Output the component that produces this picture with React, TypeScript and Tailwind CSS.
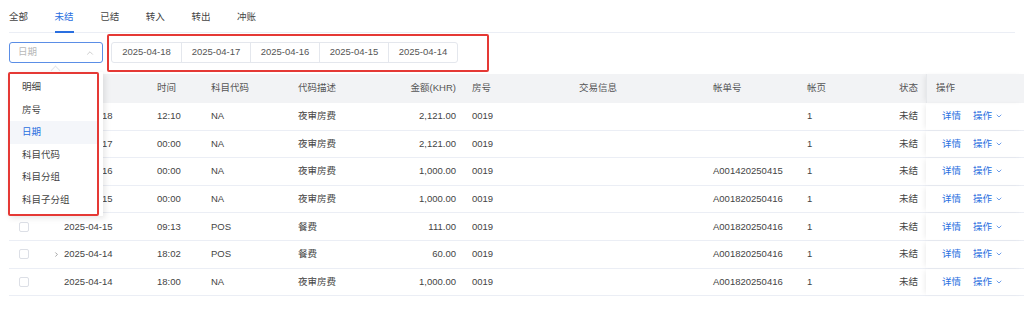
import { ChevronDown, ChevronRight, ChevronUp } from "lucide-react";

const tabs = ["全部", "未结", "已结", "转入", "转出", "冲账"];
const dates = ["2025-04-18", "2025-04-17", "2025-04-16", "2025-04-15", "2025-04-14"];
const groupBy = ["明细", "房号", "日期", "科目代码", "科目分组", "科目子分组"];

const rows = [
  { date: "2025-04-18", time: "12:10", code: "NA", desc: "夜审房费", amount: "2,121.00", room: "0019", bill: "", expand: false },
  { date: "2025-04-17", time: "00:00", code: "NA", desc: "夜审房费", amount: "2,121.00", room: "0019", bill: "", expand: false },
  { date: "2025-04-16", time: "00:00", code: "NA", desc: "夜审房费", amount: "1,000.00", room: "0019", bill: "A001420250415", expand: false },
  { date: "2025-04-15", time: "00:00", code: "NA", desc: "夜审房费", amount: "1,000.00", room: "0019", bill: "A001820250416", expand: false },
  { date: "2025-04-15", time: "09:13", code: "POS", desc: "餐费", amount: "111.00", room: "0019", bill: "A001820250416", expand: false },
  { date: "2025-04-14", time: "18:02", code: "POS", desc: "餐费", amount: "60.00", room: "0019", bill: "A001820250416", expand: true },
  { date: "2025-04-14", time: "18:00", code: "NA", desc: "夜审房费", amount: "1,000.00", room: "0019", bill: "A001820250416", expand: false },
];

const cols = "grid grid-cols-[41px_99px_54px_87px_90px_84px_96px_65px_80px_94px_61px_66px_98px]";

function Checkbox() {
  return <span className="block w-[10px] h-[10px] rounded-[2px] border border-[#dcdfe6] bg-white" />;
}

export default function App() {
  return (
    <div
      className="relative w-[1024px] h-[319px] bg-white text-[9.5px] text-[#444] overflow-hidden"
      style={{ fontFamily: '"Liberation Sans", "Noto Sans CJK SC", sans-serif' }}
    >
      {/* tabs */}
      <div className="flex h-[33px] ml-[9px] mr-[9px] border-b border-[#ebeef5]">
        {tabs.map((t, i) => (
          <div key={t} className="relative w-[45.6px] flex items-center pt-[3px]">
            <span className={i === 1 ? "text-[#2a6fe0]" : "text-[#444]"}>{t}</span>
            {i === 1 && <span className="absolute left-0 w-[19px] bottom-[-1px] h-[2px] bg-[#2a6fe0]" />}
          </div>
        ))}
      </div>

      {/* toolbar */}
      <div className="flex items-center gap-[8px] ml-[9px] mt-[9px] h-[21px]">
        <div className="w-[94px] h-[21px] border border-[#5b8ee6] rounded-[3px] flex items-center justify-between pl-[8px] pr-[7px]">
          <span className="text-[#b8b8b8]">日期</span>
          <ChevronUp className="w-[10px] h-[10px] text-[#b0b0b0]" strokeWidth={1.5} />
        </div>
        <div className="flex h-[21px] border border-[#e4e7ed] rounded-[3px]">
          {dates.map((d, i) => (
            <div
              key={d}
              className={`w-[69px] flex items-center justify-center text-[#555] ${i > 0 ? "border-l border-[#e4e7ed]" : ""}`}
            >
              {d}
            </div>
          ))}
        </div>
      </div>

      {/* table */}
      <div className="ml-[9px] mt-[11px]">
        <div className={`${cols} h-[29px] bg-[#f2f3f5] text-[#555]`}>
          <div />
          <div />
          <div className="flex items-center pl-[8px]">时间</div>
          <div className="flex items-center pl-[8px]">科目代码</div>
          <div className="flex items-center pl-[8px]">代码描述</div>
          <div className="flex items-center justify-end pr-[8px]">金额(KHR)</div>
          <div className="flex items-center pl-[8px]">房号</div>
          <div className="flex items-center justify-end pr-[8px]">交易信息</div>
          <div />
          <div className="flex items-center pl-[8px]">帐单号</div>
          <div className="flex items-center pl-[8px]">帐页</div>
          <div className="flex items-center justify-end pr-[8px]">状态</div>
          <div className="flex items-center pl-[9px] border-l border-[#e6e8eb] shadow-[-3px_0_5px_-2px_rgba(0,0,0,0.08)]">操作</div>
        </div>
        {rows.map((r, i) => (
          <div key={i} className={`${cols} h-[27.6px] border-b border-[#ebeef5]`}>
            <div className="flex items-center pl-[10px]">
              <Checkbox />
            </div>
            <div className="flex items-center pl-[3px]">
              <span className="w-[11px] flex items-center">
                {r.expand && <ChevronRight className="w-[7px] h-[7px] text-[#666]" strokeWidth={2} />}
              </span>
              {r.date}
            </div>
            <div className="flex items-center pl-[8px]">{r.time}</div>
            <div className="flex items-center pl-[8px]">{r.code}</div>
            <div className="flex items-center pl-[8px]">{r.desc}</div>
            <div className="flex items-center justify-end pr-[8px]">{r.amount}</div>
            <div className="flex items-center pl-[8px]">{r.room}</div>
            <div />
            <div />
            <div className="flex items-center pl-[8px]">{r.bill}</div>
            <div className="flex items-center pl-[8px]">1</div>
            <div className="flex items-center justify-end pr-[8px]">未结</div>
            <div className="flex items-center pl-[16px] gap-[12px] text-[#2a6fe0] shadow-[-3px_0_5px_-2px_rgba(0,0,0,0.08)]">
              <span>详情</span>
              <span className="flex items-center gap-[3px]">
                操作
                <ChevronDown className="w-[8px] h-[8px]" strokeWidth={2} />
              </span>
            </div>
          </div>
        ))}
      </div>

      {/* red annotation around date shortcuts */}
      <div className="absolute left-[107px] top-[34px] w-[382px] h-[38px] border-2 border-[#e53935] rounded-[2px]" />

      {/* group-by dropdown */}
      <div className="absolute left-[52px] top-[67px] w-[7px] h-[7px] rotate-45 bg-white border-l border-t border-[#e4e7ed]" />
      <div className="absolute left-[8px] top-[72px] w-[95px] h-[144px] bg-white shadow-[2px_2px_6px_rgba(0,0,0,0.1)]">
        <div className="w-[91px] h-[144px] border-2 border-[#e53935] rounded-[2px] pt-[2px] flex flex-col">
          {groupBy.map((g) => (
            <div
              key={g}
              className={`h-[22.5px] flex items-center pl-[12px] ${g === "日期" ? "bg-[#f4f6fa] text-[#2a6fe0]" : "text-[#444]"}`}
            >
              {g}
            </div>
          ))}
        </div>
      </div>
    </div>
  );
}
